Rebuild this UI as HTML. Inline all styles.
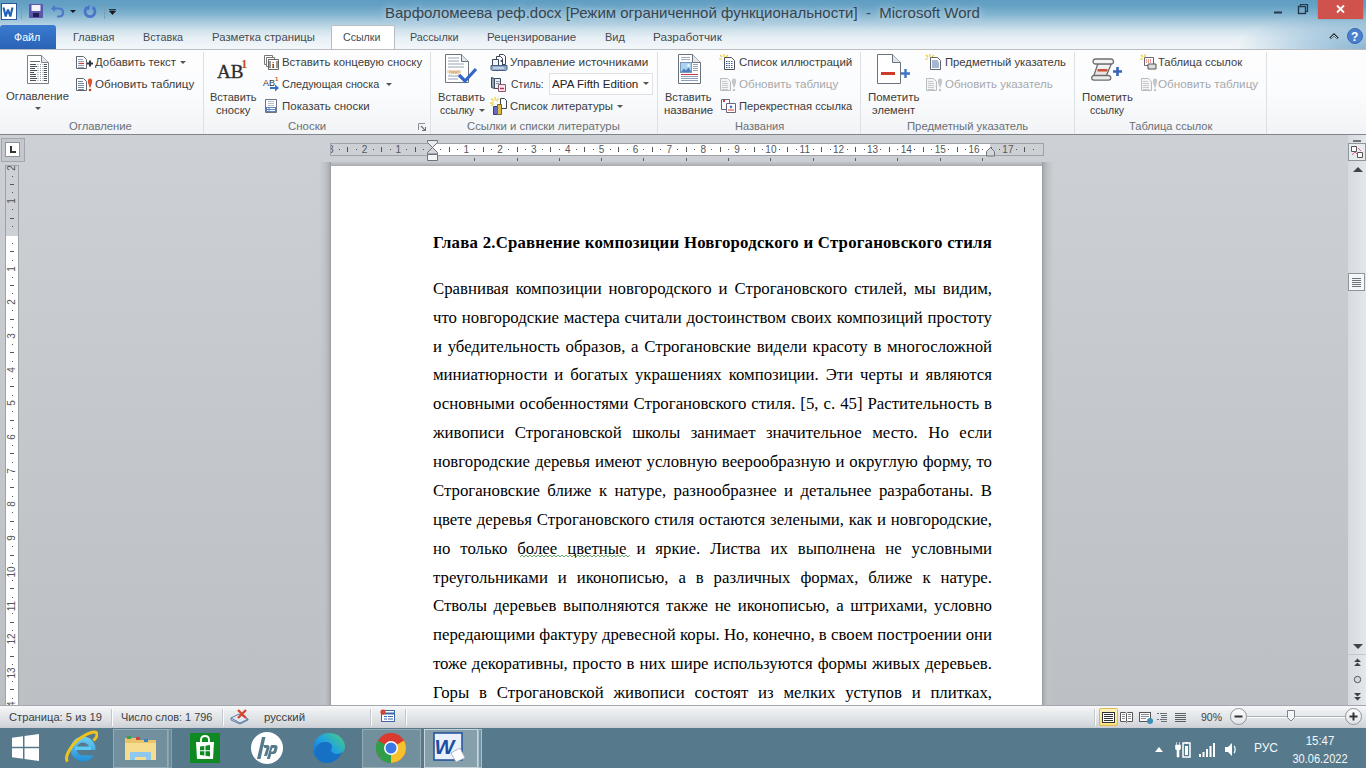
<!DOCTYPE html>
<html><head><meta charset="utf-8">
<style>
*{margin:0;padding:0;box-sizing:border-box}
html,body{width:1366px;height:768px;overflow:hidden;background:#c6c9ce}
body{position:relative;font-family:"Liberation Sans",sans-serif;font-size:11.5px;color:#3c3c3c}
.a{position:absolute}
.nw{white-space:nowrap}
#title{left:0;top:0;width:1366px;height:49px;background:linear-gradient(to bottom,#5f9dc2 0px,#66a2c5 6px,#80b3cf 14px,#a9cade 22px,#cfe1ec 30px,#e7f0f5 38px,#f3f7fa 49px)}
#ttext{left:385px;top:4px;font-size:15px;color:#37444f;text-shadow:0 0 6px rgba(235,245,252,.55),0 0 12px rgba(235,245,252,.45)}
.tab{top:31px;font-size:11.5px;line-height:13px;color:#464b51}
#ribbon{left:0;top:49px;width:1366px;height:86px;background:linear-gradient(to bottom,#fdfdfe 0,#fbfcfd 50%,#f1f3f6 100%);border-top:1px solid #b9bdc2}
#ribbon-bot{left:0;top:134px;width:1366px;height:1px;background:#80858b;box-shadow:0 1px 1px rgba(120,125,132,.35)}
.sep{top:52px;width:1px;height:82px;background:#dde1e6}
.glab{line-height:13px;font-size:11.5px;color:#6a7076;margin-top:1px}
.t{line-height:13px;font-size:11.5px;color:#3c3c3c;margin-top:1px}
.btn{color:#3c3c3c}
.rn{top:143px;width:20px;text-align:center;font-size:10px;line-height:13px;color:#555}
.vn{left:6px;width:12px;height:12px;text-align:center;font-size:10px;line-height:12px;color:#555;transform:rotate(-90deg)}
.dis{color:#a6a9ad}
#doc{left:0;top:135px;width:1348px;height:571px;background:linear-gradient(to bottom,#cdd0d5 0,#c4c7cc 50%,#bcbfc4 100%)}
#page{left:331px;top:166px;width:711px;height:540px;background:#fff}
#shl{left:319px;top:162px;width:12px;height:544px;background:linear-gradient(to left,#979ba0 0,#aeb1b6 2px,#bfc2c7 6px,rgba(198,201,206,0) 12px)}
#shr{left:1042px;top:162px;width:12px;height:544px;background:linear-gradient(to right,#979ba0 0,#aeb1b6 2px,#bfc2c7 6px,rgba(198,201,206,0) 12px)}
#sht{left:331px;top:161px;width:711px;height:5px;background:linear-gradient(to bottom,rgba(170,173,178,0),#a6a9ae)}
.ln{position:absolute;left:433px;width:559px;font-family:"Liberation Serif",serif;font-size:16.8px;line-height:29px;height:29px;color:#000;text-align:justify;text-align-last:justify;white-space:nowrap}
#status{left:0;top:705px;width:1366px;height:23px;background:linear-gradient(to bottom,#a3a8ae 0,#a3a8ae 1px,#f7f8f9 1px,#eceef0 6px,#e0e3e6 14px,#cfd2d7 22px,#c7cacf 23px)}
#taskbar{left:0;top:728px;width:1366px;height:40px;background:#567a8b}
</style></head><body>

<!-- TITLE BAR -->
<div id="title" class="a"></div>
<div class="a" style="left:1100px;top:0;width:266px;height:49px;background:radial-gradient(ellipse 130px 38px at 100% 100%,rgba(104,160,198,.75) 0,rgba(104,160,198,.4) 50%,rgba(104,160,198,0) 100%)"></div>
<div id="ttext" class="a nw">Варфоломеева реф.docx [Режим ограниченной функциональности]&nbsp; -&nbsp; Microsoft Word</div>

<svg class="a" style="left:0;top:2px" width="120" height="20" viewBox="0 0 120 20">
<rect x="1.5" y="1.5" width="15" height="16" fill="#fff" stroke="#2b5797"/>
<path d="M3.5 5.5l2.2 9 2.3-7 2.3 7 2.2-9" fill="none" stroke="#1f5fb8" stroke-width="2.1" stroke-linejoin="bevel"/>
<path d="M21.5 3v14" stroke="#7e9db0"/>
<rect x="29" y="2" width="14" height="14" rx="1" fill="#5b56ab"/><rect x="31.5" y="3" width="9" height="6" fill="#f2f2ff"/><rect x="33" y="11" width="6" height="4" fill="#1e1e50"/>
<path d="M54 6.5h5c3 0 4 2 4 4s-1 4-4 4h-2" fill="none" stroke="#4f78c8" stroke-width="2.2"/><path d="M51 6.5l4-3.5v7z" fill="#4f78c8"/>
<path d="M70 8h6l-3 3z" fill="#1a1a1a"/>
<path d="M87.5 5.3A5 5 0 1 0 92.5 5.3" fill="none" stroke="#4a74c8" stroke-width="2.8"/><path d="M89.5 2.5v5h-4.5z" fill="#4a74c8"/>
<path d="M104.5 3v14" stroke="#7e9db0"/>
<path d="M109 7.5h7M109.5 9h6l-3 3.5z" fill="#1a1a1a" stroke="#1a1a1a" stroke-width=".8"/>
</svg>
<div class="a" style="left:1318px;top:0;width:45px;height:19px;background:#d0524c;box-shadow:0 0 2px rgba(0,0,0,.15)"></div>
<svg class="a" style="left:1270px;top:0" width="96" height="45" viewBox="0 0 96 45">
<path d="M4 12.5h8" stroke="#27384a" stroke-width="2"/>
<rect x="28.5" y="6.5" width="7" height="7" fill="none" stroke="#27384a" stroke-width="1.4"/><path d="M30.5 6.5v-2h7v7h-2" fill="none" stroke="#27384a" stroke-width="1.2"/>
<path d="M67 5.5l7 7M74 5.5l-7 7" stroke="#fff" stroke-width="1.8"/>
<path d="M60 38.5l4-4 4 4" fill="none" stroke="#1f2a35" stroke-width="2.2"/><path d="M60.5 38.5l3.5-3.5 3.5 3.5" fill="none" stroke="#fff" stroke-width=".8"/>
<circle cx="85" cy="36" r="7.5" fill="#4a7fcf" stroke="#3a68b0"/>
<text x="81" y="41" font-family="Liberation Sans" font-weight="bold" font-size="12" fill="#fff">?</text>
</svg>
<!-- tabs -->
<div class="a" style="left:0;top:25px;width:56px;height:24px;background:linear-gradient(#3a7bd0,#2a63b6);border-radius:3px 3px 0 0"></div>
<div class="a tab nw " style="left:14.0px;color:#fff;transform-origin:0 0;transform:scaleX(0.933)">Файл</div>
<div class="a" style="left:331px;top:25px;width:64px;height:25px;background:#fff;border:1px solid #b9bdc2;border-bottom:none;border-radius:2px 2px 0 0"></div>
<div class="a tab nw " style="left:72.8px;transform-origin:0 0;transform:scaleX(0.946)">Главная</div>
<div class="a tab nw " style="left:143.1px;transform-origin:0 0;transform:scaleX(0.938)">Вставка</div>
<div class="a tab nw " style="left:211.5px;transform-origin:0 0;transform:scaleX(0.987)">Разметка страницы</div>
<div class="a tab nw " style="left:343.4px;transform-origin:0 0;transform:scaleX(0.923)">Ссылки</div>
<div class="a tab nw " style="left:409.7px;transform-origin:0 0;transform:scaleX(0.938)">Рассылки</div>
<div class="a tab nw " style="left:486.8px;transform-origin:0 0;transform:scaleX(1.005)">Рецензирование</div>
<div class="a tab nw " style="left:604.5px;transform-origin:0 0;transform:scaleX(0.956)">Вид</div>
<div class="a tab nw " style="left:652.8px;transform-origin:0 0;transform:scaleX(1.026)">Разработчик</div>

<!-- RIBBON -->
<div id="ribbon" class="a"></div>
<div id="ribbon-bot" class="a"></div>
<div class="a sep" style="left:203px"></div>
<div class="a sep" style="left:430px"></div>
<div class="a sep" style="left:657px"></div>
<div class="a sep" style="left:860px"></div>
<div class="a sep" style="left:1074px"></div>
<div class="a sep" style="left:1266px"></div>

<div class="a glab nw " style="left:69.1px;top:119.2px;transform-origin:0 0;transform:scaleX(0.981)">Оглавление</div>
<div class="a glab nw " style="left:288.3px;top:119.2px;transform-origin:0 0;transform:scaleX(0.996)">Сноски</div>
<div class="a glab nw " style="left:467.3px;top:119.2px;transform-origin:0 0;transform:scaleX(0.986)">Ссылки и списки литературы</div>
<div class="a glab nw " style="left:734.5px;top:119.2px;transform-origin:0 0;transform:scaleX(0.960)">Названия</div>
<div class="a glab nw " style="left:907.0px;top:119.2px;transform-origin:0 0;transform:scaleX(0.981)">Предметный указатель</div>
<div class="a glab nw " style="left:1128.9px;top:119.2px;transform-origin:0 0;transform:scaleX(0.965)">Таблица ссылок</div>

<!-- RIBBON CONTENT -->
<svg class="a" style="left:26px;top:54px" width="25" height="31" viewBox="0 0 25 31">
<path d="M1.5 1.5h14l7 7v21h-21z" fill="#fff" stroke="#7a8088"/>
<path d="M15.5 1.5v7h7" fill="#e3e7ec" stroke="#7a8088"/>
<path d="M4 7.5h10" stroke="#6a6f75"/>
<g stroke="#4a525c"><path d="M4 10.5h6M4 12.5h7M4 14.5h5M4 16.5h7M4 18.5h4M4 20.5h6M4 22.5h6M4 24.5h7M4 26.5h6"/>
<path d="M18 10.5h3M18 12.5h3M18 14.5h3M18 16.5h3M18 18.5h3M18 20.5h3M18 22.5h3M18 24.5h3M18 26.5h3"/></g>
<g stroke="#8a9099" stroke-dasharray="1 1.5"><path d="M11.5 10.5h6M11.5 12.5h6M11.5 14.5h6M11.5 16.5h6M11.5 18.5h6M11.5 20.5h6M11.5 22.5h6M11.5 24.5h6M11.5 26.5h6"/></g>
</svg>
<div class="a t nw " style="left:6.0px;top:89.2px;transform-origin:0 0;transform:scaleX(0.982)">Оглавление</div>
<div class="a" style="left:35px;top:107px;width:0;height:0;border-left:3px solid transparent;border-right:3px solid transparent;border-top:3px solid #555"></div>
<svg class="a" style="left:75px;top:55px" width="19" height="15" viewBox="0 0 19 15">
<path d="M1.5 1.5h7l3 3v9h-10z" fill="#fff" stroke="#5f666e"/>
<path d="M3 4.5h5M3 6.5h6M3 8.5h6M3 10.5h6M3 12.5h6" stroke="#8fa3bd"/><path d="M4 8.5h5" stroke="#d23a3a" stroke-width="1.2"/>
<path d="M12 8.5h6M15 5.5v6" stroke="#2d3540" stroke-width="2"/>
</svg>
<div class="a t nw " style="left:95.2px;top:55.4px;transform-origin:0 0;transform:scaleX(0.990)">Добавить текст</div>
<div class="a" style="left:180px;top:61px;width:0;height:0;border-left:3px solid transparent;border-right:3px solid transparent;border-top:3px solid #555"></div>
<svg class="a" style="left:75px;top:77px" width="19" height="15" viewBox="0 0 19 15">
<path d="M1.5 1.5h7l3 3v9h-10z" fill="#fff" stroke="#5f666e"/>
<path d="M3 4.5h5M3 6.5h6M3 8.5h6M3 10.5h6M3 12.5h6" stroke="#6f88a8"/>
<path d="M15 1.5c2 0 2.5 2 2 4l-1.5 5h-1l-1.5-5c-.5-2 0-4 2-4z" fill="#e0532e"/><circle cx="15" cy="13" r="1.3" fill="#c8401f"/>
</svg>
<div class="a t nw " style="left:95.2px;top:77.2px;transform-origin:0 0;transform:scaleX(1.010)">Обновить таблицу</div>
<svg class="a" style="left:217px;top:57px" width="33" height="24" viewBox="0 0 33 24">
<text x="0" y="21" font-family="Liberation Serif" font-size="19" fill="#2e2e2e" stroke="#2e2e2e" stroke-width=".35">AB</text>
<text x="24" y="11" font-family="Liberation Serif" font-size="13" font-weight="bold" fill="#c8502a">1</text>
</svg>
<div class="a t nw " style="left:210.0px;top:89.5px;transform-origin:0 0;transform:scaleX(0.956)">Вставить</div>
<div class="a t nw " style="left:216.2px;top:102.7px;transform-origin:0 0;transform:scaleX(0.975)">сноску</div>
<svg class="a" style="left:263px;top:54px" width="18" height="17" viewBox="0 0 18 17">
<path d="M1.5 1.5h8v9h-8z" fill="#fff" stroke="#777"/><path d="M3.5 3.5h8v9h-8z" fill="#fff" stroke="#777"/><path d="M5.5 5.5h10v10h-10z" fill="#fff" stroke="#666"/>
<path d="M7 7v7M14 7v7" stroke="#333"/><text x="9" y="14" font-size="8" font-weight="bold" font-family="Liberation Serif" fill="#223">i</text>
</svg>
<div class="a t nw " style="left:282.3px;top:55.4px;transform-origin:0 0;transform:scaleX(0.992)">Вставить концевую сноску</div>
<svg class="a" style="left:263px;top:76px" width="18" height="17" viewBox="0 0 18 17">
<text x="0" y="10" font-family="Liberation Sans" font-size="9" fill="#333">AB</text>
<text x="12" y="5" font-size="6" font-weight="bold" fill="#c8502a" font-family="Liberation Sans">1</text>
<path d="M7 11h5v-2.5l4 3.5-4 3.5v-2.5h-5z" fill="#3a6fc7"/>
</svg>
<div class="a t nw " style="left:282.3px;top:77.2px;transform-origin:0 0;transform:scaleX(0.940)">Следующая сноска</div>
<div class="a" style="left:386px;top:83px;width:0;height:0;border-left:3px solid transparent;border-right:3px solid transparent;border-top:3px solid #555"></div>
<svg class="a" style="left:264px;top:98px" width="14" height="16" viewBox="0 0 14 16">
<path d="M1.5 1.5h11v13h-11z" fill="#fff" stroke="#6b7480"/>
<path d="M4 3.5h6M4 5.5h6M4 7.5h6" stroke="#b8bec6"/><path d="M2 9h10v5h-10z" fill="#5f83b8"/><path d="M3 10.5h1.5M5.5 10.5h5.5M3 12.5h1.5M5.5 12.5h5.5" stroke="#fff"/>
</svg>
<div class="a t nw " style="left:282.3px;top:99.2px;transform-origin:0 0;transform:scaleX(0.999)">Показать сноски</div>
<svg class="a" style="left:417px;top:122px" width="9" height="9" viewBox="0 0 9 9"><path d="M1.5 8V1.5H8" fill="none" stroke="#8a8f95"/><path d="M4 4l4.5 4.5M8.5 5v3.5H5" fill="none" stroke="#6a6f75" stroke-width="1.2"/></svg>
<svg class="a" style="left:444px;top:53px" width="35" height="33" viewBox="0 0 35 33">
<path d="M1.5 1.5h16l7 7v21h-23z" fill="#fff" stroke="#6d737a"/>
<path d="M17.5 1.5v7h7" fill="#dfe4ea" stroke="#6d737a"/>
<path d="M4 5h11M4 8h11M4 11h16M4 14h16M4 23h12M4 26h10" stroke="#98a4b3"/>
<path d="M3 17h14v3h-14z" fill="#f3dcc0"/><text x="5" y="20.5" font-size="5" fill="#b85" font-family="Liberation Sans">{ww}</text>
<path d="M15 22l6 6 11-12" fill="none" stroke="#3167c9" stroke-width="3.2"/>
</svg>
<div class="a t nw " style="left:437.9px;top:89.5px;transform-origin:0 0;transform:scaleX(0.964)">Вставить</div>
<div class="a t nw " style="left:440.0px;top:102.7px;transform-origin:0 0;transform:scaleX(0.917)">ссылку</div>
<div class="a" style="left:479px;top:109px;width:0;height:0;border-left:3px solid transparent;border-right:3px solid transparent;border-top:3px solid #555"></div>
<svg class="a" style="left:490px;top:53px" width="18" height="18" viewBox="0 0 18 18">
<path d="M9.5 1.5h4l2 2v8h-6z" fill="#fff" stroke="#3c4654"/>
<path d="M6.5 3.5h4l2 2v7h-6z" fill="#fff" stroke="#3c4654"/>
<path d="M2.5 6.5h6v7h-6z" fill="#f2f5f9" stroke="#3c4654"/><circle cx="11.5" cy="8" r="1" fill="#345"/>
<path d="M1 12.5h16v3.5c0 .8-.7 1.5-1.5 1.5h-13C1.7 17.5 1 16.8 1 16z" fill="#8fa9c8" stroke="#4a6280"/><path d="M3 15h11" stroke="#dfe8f2" stroke-width="1.2"/>
</svg>
<div class="a t nw " style="left:510.0px;top:55.4px;transform-origin:0 0;transform:scaleX(1.022)">Управление источниками</div>
<svg class="a" style="left:490px;top:76px" width="18" height="17" viewBox="0 0 18 17">
<path d="M1.5 1.5l3 1v10l-3-1z" fill="#8ea0b8" stroke="#3c4a5c"/><path d="M4.5 2.5h6v10h-6z" fill="#e9eef5" stroke="#3c4a5c"/>
<path d="M6 5.5h3.5M6 7.5h3.5" stroke="#8895a5"/>
<path d="M8.5 8.5h7v7h-7z" fill="#f6e4ee" stroke="#8b5a6e"/><path d="M10 12.5h4" stroke="#c03040" stroke-width="1.4"/>
</svg>
<div class="a t nw " style="left:510.9px;top:77.2px;transform-origin:0 0;transform:scaleX(0.913)">Стиль:</div>
<div class="a" style="left:549px;top:73px;width:104px;height:22px;border:1px solid #dde1e6;background:#fff"></div>
<div class="a t nw " style="left:551.5px;top:77.2px;color:#222;transform-origin:0 0;transform:scaleX(1.010)">APA Fifth Edition</div>
<div class="a" style="left:643px;top:82px;width:0;height:0;border-left:3px solid transparent;border-right:3px solid transparent;border-top:3px solid #555"></div>
<svg class="a" style="left:490px;top:97px" width="18" height="18" viewBox="0 0 18 18">
<path d="M1 1.5l2.5 2.5M5 0v3.5M8.5 1.5L6.5 4M0 6h3.5M1 9l2.5-2" stroke="#efd34a" stroke-width="1.3"/>
<path d="M10.5 1.5h4l2 2v8h-6z" fill="#fff" stroke="#3c4654"/>
<path d="M3.5 9.5h4v8h-4z" fill="#6a6ac0" stroke="#3c3c80"/><path d="M7.5 7.5h4v10h-4z" fill="#d8be48" stroke="#7a6a20"/>
</svg>
<div class="a t nw " style="left:510.3px;top:99.2px;transform-origin:0 0;transform:scaleX(0.986)">Список литературы</div>
<div class="a" style="left:617px;top:105px;width:0;height:0;border-left:3px solid transparent;border-right:3px solid transparent;border-top:3px solid #555"></div>
<svg class="a" style="left:677px;top:53px" width="25" height="32" viewBox="0 0 25 32">
<path d="M1.5 1.5h14l8 8v21h-22z" fill="#fff" stroke="#6d737a"/>
<path d="M15.5 1.5v8h8" fill="#e3e7ec" stroke="#6d737a"/>
<path d="M4 4.5h9M4 6.5h9" stroke="#a6b0bc"/>
<rect x="3.5" y="9.5" width="11" height="10" fill="#a9d3ee" stroke="#7b98b8"/><path d="M4 19l3-3.5 2 2 2.5-3 3 4.5z" fill="#4f7fb8"/><circle cx="11.5" cy="12.5" r="1.2" fill="#fff"/>
<path d="M16 11.5h5M16 13.5h5M16 15.5h5M16 17.5h5" stroke="#98a4b3"/>
<path d="M4 21.5h17" stroke="#c9384a"/><path d="M4 23.5h17M4 25.5h17M4 27.5h17" stroke="#8aa0bb"/>
</svg>
<div class="a t nw " style="left:665.0px;top:89.5px;transform-origin:0 0;transform:scaleX(0.956)">Вставить</div>
<div class="a t nw " style="left:664.2px;top:102.7px;transform-origin:0 0;transform:scaleX(0.995)">название</div>
<svg class="a" style="left:719px;top:54px" width="18" height="16" viewBox="0 0 18 16">
<path d="M1 1l2 2M5 0v3M9 1l-2 2M0 5h3" stroke="#e8cc3a" stroke-width="1.2"/>
<path d="M5.5 3.5h7l3 3v9h-10z" fill="#fff" stroke="#4b525b"/>
<path d="M7 7.5h7M7 9.5h7M7 11.5h7M7 13.5h7" stroke="#3b5f9a" stroke-dasharray="1.5 1"/>
</svg>
<div class="a t nw " style="left:738.9px;top:55.4px;transform-origin:0 0;transform:scaleX(1.001)">Список иллюстраций</div>
<svg class="a" style="left:719px;top:77px" width="19" height="15" viewBox="0 0 19 15">
<path d="M1.5 1.5h7l3 3v9h-10z" fill="#f4f4f4" stroke="#b9bcc0"/>
<path d="M3 4.5h5M3 6.5h6M3 8.5h6M3 10.5h6M3 12.5h6" stroke="#c8cacd"/>
<path d="M15 1.5c2 0 2.5 2 2 4l-1.5 5h-1l-1.5-5c-.5-2 0-4 2-4z" fill="#c5c7ca"/><circle cx="15" cy="13" r="1.3" fill="#c5c7ca"/>
</svg>
<div class="a t nw dis" style="left:738.9px;top:77.2px;transform-origin:0 0;transform:scaleX(1.010)">Обновить таблицу</div>
<svg class="a" style="left:720px;top:98px" width="17" height="16" viewBox="0 0 17 16">
<path d="M1.5 1.5h8v10h-8z" fill="#fff" stroke="#667"/><path d="M3 3h2" stroke="#d33" stroke-width="2"/>
<path d="M6.5 5.5h9v9h-9z" fill="#fff" stroke="#667"/><path d="M10 8l2 2M12 8l-2 2" stroke="#3a6fc7" stroke-width="1.3"/><path d="M8 12h6" stroke="#d33"/>
</svg>
<div class="a t nw " style="left:738.9px;top:99.2px;transform-origin:0 0;transform:scaleX(0.971)">Перекрестная ссылка</div>
<svg class="a" style="left:876px;top:53px" width="36" height="33" viewBox="0 0 36 33">
<path d="M1.5 1.5h15l8 8v21h-23z" fill="#fff" stroke="#6d737a"/>
<path d="M16.5 1.5v8h8" fill="#dfe4ea" stroke="#6d737a"/>
<path d="M5 20.5h14" stroke="#cf3b2a" stroke-width="3"/>
<path d="M25 20.5h9M29.5 16v9" stroke="#3f74c9" stroke-width="2.4"/>
</svg>
<div class="a t nw " style="left:867.9px;top:89.5px;transform-origin:0 0;transform:scaleX(0.997)">Пометить</div>
<div class="a t nw " style="left:871.8px;top:102.7px;transform-origin:0 0;transform:scaleX(0.965)">элемент</div>
<svg class="a" style="left:925px;top:54px" width="18" height="16" viewBox="0 0 18 16">
<path d="M1 1l2 2M5 0v3M9 1l-2 2M0 5h3" stroke="#e8cc3a" stroke-width="1.2"/>
<path d="M5.5 3.5h7l3 3v9h-10z" fill="#fff" stroke="#5f666e"/><path d="M7 7h6M7 9h7M7 11h7M7 13h7" stroke="#4a6ea6"/>
</svg>
<div class="a t nw " style="left:945.1px;top:55.4px;transform-origin:0 0;transform:scaleX(0.979)">Предметный указатель</div>
<svg class="a" style="left:925px;top:77px" width="19" height="15" viewBox="0 0 19 15">
<path d="M1.5 1.5h7l3 3v9h-10z" fill="#f4f4f4" stroke="#b9bcc0"/>
<path d="M3 4.5h5M3 6.5h6M3 8.5h6M3 10.5h6M3 12.5h6" stroke="#c8cacd"/>
<path d="M15 1.5c2 0 2.5 2 2 4l-1.5 5h-1l-1.5-5c-.5-2 0-4 2-4z" fill="#c5c7ca"/><circle cx="15" cy="13" r="1.3" fill="#c5c7ca"/>
</svg>
<div class="a t nw dis" style="left:945.1px;top:77.2px;transform-origin:0 0;transform:scaleX(0.999)">Обновить указатель</div>
<svg class="a" style="left:1091px;top:57px" width="34" height="26" viewBox="0 0 34 26">
<defs><linearGradient id="scg" x1="0" y1="0" x2="0" y2="1"><stop offset="0" stop-color="#fafafa"/><stop offset=".6" stop-color="#e6e6e6"/><stop offset="1" stop-color="#f3dede"/></linearGradient></defs>
<path d="M7 6.5h13.5L15 19.5H2.5z" fill="url(#scg)" stroke="#6d6d6d" stroke-width="1.3"/>
<path d="M4.5 2h15.5a2.5 2.5 0 0 1 0 5H4.5a2.5 2.5 0 0 1 0-5z" fill="#f4f4f4" stroke="#6d6d6d" stroke-width="1.3"/>
<path d="M3 18.5h14.5a2.3 2.3 0 0 1 0 4.6H3a2.3 2.3 0 0 1 0-4.6z" fill="#ececec" stroke="#6d6d6d" stroke-width="1.3"/>
<path d="M6.5 13.3h10" stroke="#c94a2e" stroke-width="2.4"/>
<path d="M22 14.5h9M26.5 10v9" stroke="#3466b8" stroke-width="2.6"/>
</svg>
<div class="a t nw " style="left:1082.2px;top:89.5px;transform-origin:0 0;transform:scaleX(0.988)">Пометить</div>
<div class="a t nw " style="left:1090.2px;top:102.7px;transform-origin:0 0;transform:scaleX(0.912)">ссылку</div>
<svg class="a" style="left:1140px;top:54px" width="18" height="17" viewBox="0 0 18 17">
<path d="M1 1l2 2M5 0v3M0 5h3" stroke="#e8cc3a" stroke-width="1.2"/>
<path d="M4.5 3.5h9v8h-9z" fill="#fff" stroke="#667"/><path d="M6 6h6M6 8h6" stroke="#c33" stroke-dasharray="1 1"/>
<path d="M8 10h8v5h-8z" fill="#ddd" stroke="#555"/>
</svg>
<div class="a t nw " style="left:1158.3px;top:55.4px;transform-origin:0 0;transform:scaleX(0.975)">Таблица ссылок</div>
<svg class="a" style="left:1140px;top:77px" width="19" height="15" viewBox="0 0 19 15">
<path d="M1.5 1.5h7l3 3v9h-10z" fill="#f4f4f4" stroke="#b9bcc0"/>
<path d="M3 4.5h5M3 6.5h6M3 8.5h6M3 10.5h6M3 12.5h6" stroke="#c8cacd"/>
<path d="M15 1.5c2 0 2.5 2 2 4l-1.5 5h-1l-1.5-5c-.5-2 0-4 2-4z" fill="#c5c7ca"/><circle cx="15" cy="13" r="1.3" fill="#c5c7ca"/>
</svg>
<div class="a t nw dis" style="left:1158.3px;top:77.2px;transform-origin:0 0;transform:scaleX(1.019)">Обновить таблицу</div>

<!-- DOC AREA -->
<div id="doc" class="a"></div>
<div id="shl" class="a"></div><div id="shr" class="a"></div><div id="sht" class="a"></div>
<div id="page" class="a"></div>
<svg class="a" style="left:519.5px;top:554px" width="110" height="4" viewBox="0 0 110 4"><polyline points="0,3 2,1 4,3 6,1 8,3 10,1 12,3 14,1 16,3 18,1 20,3 22,1 24,3 26,1 28,3 30,1 32,3 34,1 36,3 38,1 40,3 42,1 44,3 46,1 48,3 50,1 52,3 54,1 56,3 58,1 60,3 62,1 64,3 66,1 68,3 70,1 72,3 74,1 76,3 78,1 80,3 82,1 84,3 86,1 88,3 90,1 92,3 94,1 96,3 98,1 100,3 102,1 104,3 106,1 108,3 110,1" fill="none" stroke="#5aa05a" stroke-width="0.9"/></svg>
<!-- RULERS -->
<div class="a" style="left:330px;top:143px;width:714px;height:13px;background:#cdd1d6;border:1px solid #9ea3a9"></div>
<div class="a" style="left:331px;top:144px;width:8px;height:11px;overflow:hidden"><div class="a rn" style="left:-10.3px;top:-1px">3</div></div>
<div class="a" style="left:432.3px;top:144px;width:558.1px;height:11px;background:#fff"></div>
<div class="a" style="left:338.7px;top:149px;width:1px;height:1px;background:#555"></div>
<div class="a" style="left:347.1px;top:147px;width:1px;height:5px;background:#555"></div>
<div class="a" style="left:355.6px;top:149px;width:1px;height:1px;background:#555"></div>
<div class="a rn" style="left:354.6px">2</div>
<div class="a" style="left:372.5px;top:149px;width:1px;height:1px;background:#555"></div>
<div class="a" style="left:381.0px;top:147px;width:1px;height:5px;background:#555"></div>
<div class="a" style="left:389.5px;top:149px;width:1px;height:1px;background:#555"></div>
<div class="a rn" style="left:388.4px">1</div>
<div class="a" style="left:406.4px;top:149px;width:1px;height:1px;background:#555"></div>
<div class="a" style="left:414.9px;top:147px;width:1px;height:5px;background:#555"></div>
<div class="a" style="left:423.3px;top:149px;width:1px;height:1px;background:#555"></div>
<div class="a" style="left:440.3px;top:149px;width:1px;height:1px;background:#555"></div>
<div class="a" style="left:448.7px;top:147px;width:1px;height:5px;background:#555"></div>
<div class="a" style="left:457.2px;top:149px;width:1px;height:1px;background:#555"></div>
<div class="a rn" style="left:456.2px">1</div>
<div class="a" style="left:474.1px;top:149px;width:1px;height:1px;background:#555"></div>
<div class="a" style="left:482.6px;top:147px;width:1px;height:5px;background:#555"></div>
<div class="a" style="left:491.1px;top:149px;width:1px;height:1px;background:#555"></div>
<div class="a rn" style="left:490.0px">2</div>
<div class="a" style="left:508.0px;top:149px;width:1px;height:1px;background:#555"></div>
<div class="a" style="left:516.5px;top:147px;width:1px;height:5px;background:#555"></div>
<div class="a" style="left:524.9px;top:149px;width:1px;height:1px;background:#555"></div>
<div class="a rn" style="left:523.9px">3</div>
<div class="a" style="left:541.8px;top:149px;width:1px;height:1px;background:#555"></div>
<div class="a" style="left:550.3px;top:147px;width:1px;height:5px;background:#555"></div>
<div class="a" style="left:558.8px;top:149px;width:1px;height:1px;background:#555"></div>
<div class="a rn" style="left:557.7px">4</div>
<div class="a" style="left:575.7px;top:149px;width:1px;height:1px;background:#555"></div>
<div class="a" style="left:584.2px;top:147px;width:1px;height:5px;background:#555"></div>
<div class="a" style="left:592.6px;top:149px;width:1px;height:1px;background:#555"></div>
<div class="a rn" style="left:591.6px">5</div>
<div class="a" style="left:609.6px;top:149px;width:1px;height:1px;background:#555"></div>
<div class="a" style="left:618.0px;top:147px;width:1px;height:5px;background:#555"></div>
<div class="a" style="left:626.5px;top:149px;width:1px;height:1px;background:#555"></div>
<div class="a rn" style="left:625.5px">6</div>
<div class="a" style="left:643.4px;top:149px;width:1px;height:1px;background:#555"></div>
<div class="a" style="left:651.9px;top:147px;width:1px;height:5px;background:#555"></div>
<div class="a" style="left:660.4px;top:149px;width:1px;height:1px;background:#555"></div>
<div class="a rn" style="left:659.3px">7</div>
<div class="a" style="left:677.3px;top:149px;width:1px;height:1px;background:#555"></div>
<div class="a" style="left:685.8px;top:147px;width:1px;height:5px;background:#555"></div>
<div class="a" style="left:694.2px;top:149px;width:1px;height:1px;background:#555"></div>
<div class="a rn" style="left:693.2px">8</div>
<div class="a" style="left:711.1px;top:149px;width:1px;height:1px;background:#555"></div>
<div class="a" style="left:719.6px;top:147px;width:1px;height:5px;background:#555"></div>
<div class="a" style="left:728.1px;top:149px;width:1px;height:1px;background:#555"></div>
<div class="a rn" style="left:727.0px">9</div>
<div class="a" style="left:745.0px;top:149px;width:1px;height:1px;background:#555"></div>
<div class="a" style="left:753.5px;top:147px;width:1px;height:5px;background:#555"></div>
<div class="a" style="left:761.9px;top:149px;width:1px;height:1px;background:#555"></div>
<div class="a rn" style="left:760.9px">10</div>
<div class="a" style="left:778.9px;top:149px;width:1px;height:1px;background:#555"></div>
<div class="a" style="left:787.3px;top:147px;width:1px;height:5px;background:#555"></div>
<div class="a" style="left:795.8px;top:149px;width:1px;height:1px;background:#555"></div>
<div class="a rn" style="left:794.8px">11</div>
<div class="a" style="left:812.7px;top:149px;width:1px;height:1px;background:#555"></div>
<div class="a" style="left:821.2px;top:147px;width:1px;height:5px;background:#555"></div>
<div class="a" style="left:829.7px;top:149px;width:1px;height:1px;background:#555"></div>
<div class="a rn" style="left:828.6px">12</div>
<div class="a" style="left:846.6px;top:149px;width:1px;height:1px;background:#555"></div>
<div class="a" style="left:855.0px;top:147px;width:1px;height:5px;background:#555"></div>
<div class="a" style="left:863.5px;top:149px;width:1px;height:1px;background:#555"></div>
<div class="a rn" style="left:862.5px">13</div>
<div class="a" style="left:880.4px;top:149px;width:1px;height:1px;background:#555"></div>
<div class="a" style="left:888.9px;top:147px;width:1px;height:5px;background:#555"></div>
<div class="a" style="left:897.4px;top:149px;width:1px;height:1px;background:#555"></div>
<div class="a rn" style="left:896.3px">14</div>
<div class="a" style="left:914.3px;top:149px;width:1px;height:1px;background:#555"></div>
<div class="a" style="left:922.8px;top:147px;width:1px;height:5px;background:#555"></div>
<div class="a" style="left:931.2px;top:149px;width:1px;height:1px;background:#555"></div>
<div class="a rn" style="left:930.2px">15</div>
<div class="a" style="left:948.2px;top:149px;width:1px;height:1px;background:#555"></div>
<div class="a" style="left:956.6px;top:147px;width:1px;height:5px;background:#555"></div>
<div class="a" style="left:965.1px;top:149px;width:1px;height:1px;background:#555"></div>
<div class="a rn" style="left:964.1px">16</div>
<div class="a" style="left:982.0px;top:149px;width:1px;height:1px;background:#555"></div>
<div class="a" style="left:990.5px;top:147px;width:1px;height:5px;background:#555"></div>
<div class="a" style="left:999.0px;top:149px;width:1px;height:1px;background:#555"></div>
<div class="a rn" style="left:997.9px">17</div>
<div class="a" style="left:1015.9px;top:149px;width:1px;height:1px;background:#555"></div>
<div class="a" style="left:1024.3px;top:147px;width:1px;height:5px;background:#555"></div>
<div class="a" style="left:1032.8px;top:149px;width:1px;height:1px;background:#555"></div>
<div class="a" style="left:474.1px;top:158px;width:1px;height:3px;background:#5d6268"></div>
<div class="a" style="left:516.5px;top:158px;width:1px;height:3px;background:#5d6268"></div>
<div class="a" style="left:558.8px;top:158px;width:1px;height:3px;background:#5d6268"></div>
<div class="a" style="left:601.1px;top:158px;width:1px;height:3px;background:#5d6268"></div>
<div class="a" style="left:643.4px;top:158px;width:1px;height:3px;background:#5d6268"></div>
<div class="a" style="left:685.8px;top:158px;width:1px;height:3px;background:#5d6268"></div>
<div class="a" style="left:728.1px;top:158px;width:1px;height:3px;background:#5d6268"></div>
<div class="a" style="left:770.4px;top:158px;width:1px;height:3px;background:#5d6268"></div>
<div class="a" style="left:812.7px;top:158px;width:1px;height:3px;background:#5d6268"></div>
<div class="a" style="left:855.0px;top:158px;width:1px;height:3px;background:#5d6268"></div>
<div class="a" style="left:897.4px;top:158px;width:1px;height:3px;background:#5d6268"></div>
<div class="a" style="left:939.7px;top:158px;width:1px;height:3px;background:#5d6268"></div>
<div class="a" style="left:982.0px;top:158px;width:1px;height:3px;background:#5d6268"></div>
<svg class="a" style="left:426px;top:139px" width="13" height="23" viewBox="0 0 13 23">
<path d="M1.5 1.5h10v2l-5 5-5-5z" fill="#e8eaed" stroke="#6e737a"/>
<path d="M6.5 8.5l5 5v1.5h-10v-1.5z" fill="#d3d6da" stroke="#6e737a"/>
<path d="M1.5 15.5h10v6h-10z" fill="#f3f4f6" stroke="#6e737a"/>
</svg>
<svg class="a" style="left:985px;top:146px" width="11" height="11" viewBox="0 0 11 11">
<path d="M5.5 1.5l4 4v4.5h-8v-4.5z" fill="#d3d6da" stroke="#6e737a"/>
</svg>
<div class="a" style="left:1px;top:138px;width:24px;height:24px;border:1px solid #a2a7ad;background:#c4c8ce"></div>
<div class="a" style="left:5px;top:142px;width:15px;height:15px;border:1px solid #8e949a;background:#fff"></div>
<div class="a" style="left:10px;top:146px;width:2px;height:7px;background:#333"></div><div class="a" style="left:10px;top:151px;width:6px;height:2px;background:#333"></div>
<div class="a" style="left:5px;top:165px;width:14px;height:545px;background:#cdd1d6;border:1px solid #9ea3a9;border-bottom:none"></div>
<div class="a" style="left:6px;top:236.0px;width:12px;height:480px;background:#fff"></div>
<div class="a" style="left:6px;top:166px;width:12px;height:540px;overflow:hidden"><div class="a" style="left:0;top:-1px;width:12px;height:541px">
<div class="a vn" style="left:0;top:-3.4px">2</div>
<div class="a" style="left:5.5px;top:10.6px;width:1px;height:1px;background:#555"></div>
<div class="a" style="left:4px;top:19.0px;width:4px;height:1px;background:#555"></div>
<div class="a" style="left:5.5px;top:27.4px;width:1px;height:1px;background:#555"></div>
<div class="a vn" style="left:0;top:30.3px">1</div>
<div class="a" style="left:5.5px;top:44.2px;width:1px;height:1px;background:#555"></div>
<div class="a" style="left:4px;top:52.7px;width:4px;height:1px;background:#555"></div>
<div class="a" style="left:5.5px;top:61.1px;width:1px;height:1px;background:#555"></div>
<div class="a" style="left:5.5px;top:77.9px;width:1px;height:1px;background:#555"></div>
<div class="a" style="left:4px;top:86.3px;width:4px;height:1px;background:#555"></div>
<div class="a" style="left:5.5px;top:94.8px;width:1px;height:1px;background:#555"></div>
<div class="a vn" style="left:0;top:97.7px">1</div>
<div class="a" style="left:5.5px;top:111.6px;width:1px;height:1px;background:#555"></div>
<div class="a" style="left:4px;top:120.0px;width:4px;height:1px;background:#555"></div>
<div class="a" style="left:5.5px;top:128.4px;width:1px;height:1px;background:#555"></div>
<div class="a vn" style="left:0;top:131.4px">2</div>
<div class="a" style="left:5.5px;top:145.3px;width:1px;height:1px;background:#555"></div>
<div class="a" style="left:4px;top:153.7px;width:4px;height:1px;background:#555"></div>
<div class="a" style="left:5.5px;top:162.1px;width:1px;height:1px;background:#555"></div>
<div class="a vn" style="left:0;top:165.0px">3</div>
<div class="a" style="left:5.5px;top:179.0px;width:1px;height:1px;background:#555"></div>
<div class="a" style="left:4px;top:187.4px;width:4px;height:1px;background:#555"></div>
<div class="a" style="left:5.5px;top:195.8px;width:1px;height:1px;background:#555"></div>
<div class="a vn" style="left:0;top:198.7px">4</div>
<div class="a" style="left:5.5px;top:212.6px;width:1px;height:1px;background:#555"></div>
<div class="a" style="left:4px;top:221.1px;width:4px;height:1px;background:#555"></div>
<div class="a" style="left:5.5px;top:229.5px;width:1px;height:1px;background:#555"></div>
<div class="a vn" style="left:0;top:232.4px">5</div>
<div class="a" style="left:5.5px;top:246.3px;width:1px;height:1px;background:#555"></div>
<div class="a" style="left:4px;top:254.7px;width:4px;height:1px;background:#555"></div>
<div class="a" style="left:5.5px;top:263.2px;width:1px;height:1px;background:#555"></div>
<div class="a vn" style="left:0;top:266.1px">6</div>
<div class="a" style="left:5.5px;top:280.0px;width:1px;height:1px;background:#555"></div>
<div class="a" style="left:4px;top:288.4px;width:4px;height:1px;background:#555"></div>
<div class="a" style="left:5.5px;top:296.8px;width:1px;height:1px;background:#555"></div>
<div class="a vn" style="left:0;top:299.8px">7</div>
<div class="a" style="left:5.5px;top:313.7px;width:1px;height:1px;background:#555"></div>
<div class="a" style="left:4px;top:322.1px;width:4px;height:1px;background:#555"></div>
<div class="a" style="left:5.5px;top:330.5px;width:1px;height:1px;background:#555"></div>
<div class="a vn" style="left:0;top:333.4px">8</div>
<div class="a" style="left:5.5px;top:347.4px;width:1px;height:1px;background:#555"></div>
<div class="a" style="left:4px;top:355.8px;width:4px;height:1px;background:#555"></div>
<div class="a" style="left:5.5px;top:364.2px;width:1px;height:1px;background:#555"></div>
<div class="a vn" style="left:0;top:367.1px">9</div>
<div class="a" style="left:5.5px;top:381.0px;width:1px;height:1px;background:#555"></div>
<div class="a" style="left:4px;top:389.5px;width:4px;height:1px;background:#555"></div>
<div class="a" style="left:5.5px;top:397.9px;width:1px;height:1px;background:#555"></div>
<div class="a vn" style="left:0;top:400.8px">10</div>
<div class="a" style="left:5.5px;top:414.7px;width:1px;height:1px;background:#555"></div>
<div class="a" style="left:4px;top:423.1px;width:4px;height:1px;background:#555"></div>
<div class="a" style="left:5.5px;top:431.6px;width:1px;height:1px;background:#555"></div>
<div class="a vn" style="left:0;top:434.5px">11</div>
<div class="a" style="left:5.5px;top:448.4px;width:1px;height:1px;background:#555"></div>
<div class="a" style="left:4px;top:456.8px;width:4px;height:1px;background:#555"></div>
<div class="a" style="left:5.5px;top:465.2px;width:1px;height:1px;background:#555"></div>
<div class="a vn" style="left:0;top:468.2px">12</div>
<div class="a" style="left:5.5px;top:482.1px;width:1px;height:1px;background:#555"></div>
<div class="a" style="left:4px;top:490.5px;width:4px;height:1px;background:#555"></div>
<div class="a" style="left:5.5px;top:498.9px;width:1px;height:1px;background:#555"></div>
<div class="a vn" style="left:0;top:501.8px">13</div>
<div class="a" style="left:5.5px;top:515.8px;width:1px;height:1px;background:#555"></div>
<div class="a" style="left:4px;top:524.2px;width:4px;height:1px;background:#555"></div>
<div class="a" style="left:5.5px;top:532.6px;width:1px;height:1px;background:#555"></div>
<div class="a vn" style="left:0;top:535.5px">14</div>
</div></div>
<div class="a" style="left:1348px;top:135px;width:18px;height:571px;background:linear-gradient(to right,#d7dbe1,#e3e6eb)"></div>
<div class="a" style="left:1353px;top:140px;width:8px;height:2px;background:#6f757c"></div>
<svg class="a" style="left:1348px;top:143px" width="18" height="18" viewBox="0 0 18 18">
<rect x="0.5" y="0.5" width="17" height="17" fill="#e9ecef" stroke="#8f959c"/>
<path d="M3.5 3.5h5v5h-5zM9.5 9.5h5v5h-5z" fill="#fff" stroke="#555"/><path d="M4 12l3-3 3 3M10 5l3 3" fill="none" stroke="#c46" stroke-width=".8"/>
</svg>
<div class="a" style="left:1353px;top:167px;width:0;height:0;border-left:5px solid transparent;border-right:5px solid transparent;border-bottom:5px solid #404448"></div>
<svg class="a" style="left:1348px;top:273px" width="17" height="18" viewBox="0 0 17 18">
<rect x="0.5" y="0.5" width="16" height="17" fill="#f5f6f8" stroke="#8f959c"/>
<path d="M4 5.5h9M4 7.5h9M4 9.5h9M4 11.5h9M4 13.5h9" stroke="#6d737a"/>
</svg>
<div class="a" style="left:1353px;top:644px;width:0;height:0;border-left:5px solid transparent;border-right:5px solid transparent;border-top:5px solid #404448"></div>
<div class="a" style="left:1348px;top:654px;width:18px;height:1px;background:#c3c8ce"></div>
<svg class="a" style="left:1352px;top:657px" width="11" height="45" viewBox="0 0 11 45">
<path d="M2 5l3.5-3.5L9 5zM2 9l3.5-3.5L9 9z" fill="#3d4247"/>
<circle cx="5.5" cy="22.5" r="3.2" fill="#d6d9dd" stroke="#555"/>
<path d="M2 36l3.5 3.5L9 36zM2 40l3.5 3.5L9 40z" fill="#3d4247"/>
</svg>
<div class="a" id="pclip" style="left:0;top:166px;width:1366px;height:540px;overflow:hidden"><div class="a" style="left:0;top:-166px;width:1366px;height:768px">
<div class="ln" style="top:227.6px;font-weight:bold;letter-spacing:0.2px">Глава 2.Сравнение композиции Новгородского и Строгановского стиля</div>
<div class="ln" style="top:273.7px">Сравнивая композиции новгородского и Строгановского стилей, мы видим,</div>
<div class="ln" style="top:302.6px">что новгородские мастера считали достоинством своих композиций простоту</div>
<div class="ln" style="top:331.5px">и убедительность образов, а Строгановские видели красоту в многосложной</div>
<div class="ln" style="top:360.4px">миниатюрности и богатых украшениях композиции. Эти черты и являются</div>
<div class="ln" style="top:389.2px">основными особенностями Строгановского стиля. [5, с. 45] Растительность в</div>
<div class="ln" style="top:418.1px">живописи Строгановской школы занимает значительное место. Но если</div>
<div class="ln" style="top:447.0px">новгородские деревья имеют условную веерообразную и округлую форму, то</div>
<div class="ln" style="top:475.9px">Строгановские ближе к натуре, разнообразнее и детальнее разработаны. В</div>
<div class="ln" style="top:504.8px">цвете деревья Строгановского стиля остаются зелеными, как и новгородские,</div>
<div class="ln" style="top:533.6px">но только <span class="sq">более цветные</span> и яркие. Листва их выполнена не условными</div>
<div class="ln" style="top:562.5px">треугольниками и иконописью, а в различных формах, ближе к натуре.</div>
<div class="ln" style="top:591.4px">Стволы деревьев выполняются также не иконописью, а штрихами, условно</div>
<div class="ln" style="top:620.3px">передающими фактуру древесной коры. Но, конечно, в своем построении они</div>
<div class="ln" style="top:649.2px">тоже декоративны, просто в них шире используются формы живых деревьев.</div>
<div class="ln" style="top:678.1px">Горы в Строгановской живописи состоят из мелких уступов и плитках,</div>
</div></div>

<!-- STATUS -->
<div id="status" class="a"></div>
<!-- STATUS CONTENT -->
<div class="a t nw " style="left:8.5px;top:710.5px;margin-top:0;color:#3a3f45;transform-origin:0 0;transform:scaleX(0.971)">Страница: 5 из 19</div>
<div class="a" style="left:111px;top:709px;width:1px;height:17px;background:#c3c7cd;box-shadow:1px 0 0 #fafbfc"></div>
<div class="a t nw " style="left:121.0px;top:710.5px;margin-top:0;color:#3a3f45;transform-origin:0 0;transform:scaleX(0.946)">Число слов: 1 796</div>
<div class="a" style="left:222px;top:709px;width:1px;height:17px;background:#c3c7cd;box-shadow:1px 0 0 #fafbfc"></div>
<svg class="a" style="left:230px;top:708px" width="20" height="17" viewBox="0 0 20 17">
<path d="M1 10l8-4 9 5-8 4z" fill="#dfe8f3" stroke="#5b7ba6"/><path d="M1 10v2l9 4 8-4v-1" fill="none" stroke="#5b7ba6"/>
<path d="M8 2l8 8M16 2l-8 8" stroke="#d8412a" stroke-width="2.2"/>
</svg>
<div class="a t nw " style="left:263.9px;top:710.5px;margin-top:0;color:#3a3f45;transform-origin:0 0;transform:scaleX(0.996)">русский</div>
<div class="a" style="left:370px;top:709px;width:1px;height:17px;background:#c3c7cd;box-shadow:1px 0 0 #fafbfc"></div>
<svg class="a" style="left:379px;top:709px" width="17" height="14" viewBox="0 0 17 14">
<rect x="2.5" y="1.5" width="13" height="11" fill="#fff" stroke="#3c66a8"/><path d="M2.5 4.5h13" stroke="#3c66a8" stroke-width="2"/>
<path d="M5 7.5h3M9 7.5h5M5 10h3M9 10h5" stroke="#3c66a8"/><circle cx="4" cy="3" r="2.6" fill="#d8432c"/>
</svg>
<div class="a" style="left:405px;top:709px;width:1px;height:17px;background:#c3c7cd;box-shadow:1px 0 0 #fafbfc"></div>
<div class="a" style="left:1094px;top:709px;width:1px;height:17px;background:#c3c7cd;box-shadow:1px 0 0 #fafbfc"></div>
<div class="a" style="left:1099px;top:708px;width:19px;height:18px;border:1px solid #e0b850;border-radius:2px;background:linear-gradient(#fff3c0,#ffe27a)"></div>
<svg class="a" style="left:1100px;top:709px" width="100" height="16" viewBox="0 0 100 16">
<rect x="2.5" y="3.5" width="12" height="10" fill="#fff" stroke="#333"/><path d="M4 5.5h9M4 7.5h9M4 9.5h9M4 11.5h9" stroke="#333"/>
<path d="M20.5 3.5h5l1 1 1-1h5v9h-5l-1 1-1-1h-5z" fill="#fff" stroke="#555"/><path d="M26.5 4.5v8" stroke="#555"/><path d="M22 5.5h3M22 7.5h3M22 9.5h3M28 5.5h3M28 7.5h3M28 9.5h3" stroke="#8a8f95"/>
<rect x="39.5" y="3.5" width="11" height="9" fill="#fff" stroke="#555"/><path d="M41 5.5h8M41 7.5h8M41 9.5h5" stroke="#8a8f95"/><circle cx="50" cy="12" r="3" fill="#3b8fb8"/>
<path d="M57 4.5h2M60 4.5h7M61 6.5h6M61 8.5h6M57 10.5h2M60 10.5h7M61 12.5h6" stroke="#6a6f75"/>
<path d="M75 4.5h11M75 6.5h11M75 8.5h11M75 10.5h11M75 12.5h11" stroke="#5a5f65"/>
</svg>
<div class="a t nw " style="left:1200.5px;top:710.5px;margin-top:0;color:#3a3f45;transform-origin:0 0;transform:scaleX(0.912)">90%</div>
<svg class="a" style="left:1228px;top:707px" width="138" height="20" viewBox="0 0 138 20">
<circle cx="10.5" cy="9.5" r="8" fill="url(#zg)" stroke="#8d949b"/><path d="M6.5 9.5h8" stroke="#333" stroke-width="2"/>
<path d="M19 9.5h99" stroke="#a9aeb4"/><path d="M19 10.5h99" stroke="#fff"/>
<path d="M59.5 3.5h7v7l-3.5 3.5-3.5-3.5z" fill="#f6f7f9" stroke="#7d838a"/>
<circle cx="125.5" cy="9.5" r="8" fill="url(#zg)" stroke="#8d949b"/><path d="M121.5 9.5h8M125.5 5.5v8" stroke="#333" stroke-width="2"/>
<defs><linearGradient id="zg" x1="0" y1="0" x2="0" y2="1"><stop offset="0" stop-color="#fff"/><stop offset="1" stop-color="#dfe2e6"/></linearGradient></defs>
</svg>
<div id="taskbar" class="a"></div>
<div class="a" style="left:113px;top:729px;width:55px;height:39px;background:rgba(255,255,255,.16);border:1px solid rgba(255,255,255,.25)"></div>
<div class="a" style="left:168px;top:729px;width:4px;height:39px;background:rgba(255,255,255,.12);border:1px solid rgba(255,255,255,.2)"></div>
<div class="a" style="left:362px;top:729px;width:59px;height:39px;background:rgba(255,255,255,.16);border:1px solid rgba(255,255,255,.25)"></div>
<div class="a" style="left:424px;top:729px;width:54px;height:39px;background:rgba(255,255,255,.28);border:1px solid rgba(255,255,255,.55)"></div>
<div class="a" style="left:478px;top:729px;width:4px;height:39px;background:rgba(255,255,255,.2);border:1px solid rgba(255,255,255,.4)"></div>
<svg class="a" style="left:12px;top:734px" width="27" height="27" viewBox="0 0 27 27">
<path d="M0 3.8l11-1.5v10.4H0zM12.5 2.1L27 0v12.7H12.5zM0 14.2h11v10.5L0 23.2zM12.5 14.2H27V27l-14.5-2z" fill="#fff"/>
</svg>
<svg class="a" style="left:62px;top:730px" width="36" height="34" viewBox="0 0 36 34">
<defs><linearGradient id="ieg" x1="0" y1="0" x2="0" y2="1"><stop offset="0" stop-color="#6fd0f5"/><stop offset="1" stop-color="#1f8fd6"/></linearGradient></defs>
<circle cx="21" cy="19" r="12.5" fill="url(#ieg)"/>
<circle cx="21" cy="19" r="6.5" fill="#567a8b"/>
<path d="M13 16.5h16v3.5H13z" fill="#5ccaf2"/>
<path d="M21 20h14v5.5H24z" fill="#567a8b"/>
<path d="M5.5 31.5C2 27 9 14 20 7c7-4.5 13-6 14.5-4s-1 5.5-3 7.5" fill="none" stroke="#f0c21c" stroke-width="3"/>
</svg>
<svg class="a" style="left:124px;top:735px" width="33" height="27" viewBox="0 0 33 27">
<path d="M1 3h11l2 2h18v20H1z" fill="#e9c46a"/><path d="M1 8h31v17H1z" fill="#f6dc8e"/>
<rect x="3" y="1" width="4" height="3" fill="#3aa04a"/><rect x="12" y="2" width="4" height="3" fill="#c9473a"/><rect x="20" y="4" width="4" height="3" fill="#3a7fc4"/>
<path d="M6 17h21v8h-5v-3h-11v3H6z" fill="#8fc8ef"/>
</svg>
<svg class="a" style="left:190px;top:733px" width="30" height="30" viewBox="0 0 30 30">
<rect width="30" height="30" fill="#0f8a23"/>
<path d="M11 9V7c0-2.5 1.8-4 4-4s4 1.5 4 4v2" fill="none" stroke="#fff" stroke-width="1.8"/>
<path d="M6 9h18l-1 17H7z" fill="#fff"/>
<path d="M10 13.5l4.3-.6v4.3H10zM15.5 12.7l4.5-.7v5.2h-4.5zM10 18.3h4.3v4.3l-4.3-.6zM15.5 18.3H20v5.2l-4.5-.7z" fill="#0f8a23"/>
</svg>
<svg class="a" style="left:251px;top:732px" width="32" height="32" viewBox="0 0 32 32">
<circle cx="16" cy="16" r="16" fill="#fff"/>
<path d="M11 5h3.5L9.5 27H6z" fill="#567a8b"/>
<path d="M12 13h4c2 0 3 1 2.5 3l-2.5 8h-3l2.5-8h-2z" fill="#567a8b"/>
<path d="M20 13h4c2.2 0 3 1.3 2.5 3.2l-1 3.6c-.5 1.8-1.5 2.2-3.2 2.2h-2l-1.5 5h-3zM21.5 16l-1.5 3.5h1.5c.8 0 1-.4 1.3-1.2l.6-2.3z" fill="#567a8b" fill-rule="evenodd"/>
</svg>
<svg class="a" style="left:312px;top:732px" width="34" height="32" viewBox="0 0 34 32">
<defs><linearGradient id="eg" x1="0" y1="1" x2="1" y2="0"><stop offset="0" stop-color="#1465c0"/><stop offset=".5" stop-color="#1d9ee6"/><stop offset="1" stop-color="#4bd07a"/></linearGradient></defs>
<path d="M17 1c9 0 16 6 16 14 0 4-3 7-8 7-4 0-6-2-6-4 0-1 1-2 1-3 0-3-3-5-7-5C7 10 3 15 3 20c0 6 5 11 12 11-8 0-14-6-14-14C1 8 8 1 17 1z" fill="url(#eg)"/>
<path d="M3 20c0-5 4-10 10-10 4 0 7 2 7 5 0 1-1 2-1 3 0 2 2 4 6 4 2 0 4-1 5-2-2 6-8 11-15 11S3 26 3 20z" fill="#1570c6"/>
</svg>
<svg class="a" style="left:376px;top:733px" width="30" height="30" viewBox="0 0 30 30">
<circle cx="15" cy="15" r="15" fill="#db3a2f"/>
<path d="M15 15L2 22.5A15 15 0 0 0 15 30z" fill="#2f9e48"/><path d="M15 15L2 22.5A15 15 0 0 1 2 7.5z" fill="#2f9e48"/>
<path d="M15 15H30A15 15 0 0 1 15 30z" fill="#f6c12c"/><path d="M15 15L28 7.5A15 15 0 0 1 30 15z" fill="#f6c12c"/>
<circle cx="15" cy="15" r="7" fill="#fff"/><circle cx="15" cy="15" r="5.5" fill="#3a78e6"/>
</svg>
<svg class="a" style="left:433px;top:732px" width="34" height="32" viewBox="0 0 34 32">
<rect x="1" y="1" width="28" height="27" fill="#eaf1fa" stroke="#1f4f9a" stroke-width="1.5"/>
<text x="1.5" y="22" font-family="Liberation Sans" font-weight="bold" font-style="italic" font-size="21" fill="#1a4fa3">W</text>
<path d="M18 21l9-5 5 10-9 4z" fill="#fff" stroke="#9aa6b5" stroke-width=".8"/>
</svg>
<div class="a" style="left:1155px;top:747px;width:0;height:0;border-left:4px solid transparent;border-right:4px solid transparent;border-bottom:5px solid #fff"></div>
<svg class="a" style="left:1175px;top:741px" width="70" height="17" viewBox="0 0 70 17">
<path d="M1.5 1v3M4.5 1v3M0.5 4h5v4l-1.5 1.5v6.5h-2v-6.5L0.5 8z" fill="#fff" stroke="#fff" stroke-width=".6"/>
<rect x="8" y="2" width="7" height="14" fill="none" stroke="#fff" stroke-width="1.5"/><rect x="10" y="1" width="3" height="1.5" fill="#fff"/><rect x="10" y="5" width="3" height="9" fill="#fff"/>
<path d="M24 13h2v3h-2zM27.5 11h2v5h-2zM31 8h2v8h-2zM34.5 5h2v11h-2zM38 2h2v14h-2z" fill="#fff"/>
<path d="M50 6h3l4-4v13l-4-4h-3z" fill="#fff"/><path d="M59 5c1.5 1.5 1.5 5.5 0 7" fill="none" stroke="#fff" stroke-width="1.2"/>
</svg>
<div class="a nw" style="left:1254px;top:741px;font-size:12px;line-height:14px;color:#f4f7f9">РУС</div>
<div class="a nw" style="left:1290px;top:734px;width:60px;text-align:center;font-size:12px;line-height:14px;color:#f4f7f9;transform:scaleX(.95)">15:47</div>
<div class="a nw" style="left:1290px;top:752px;width:60px;text-align:center;font-size:12px;line-height:14px;color:#f4f7f9;transform:scaleX(.92)">30.06.2022</div>

</body></html>
